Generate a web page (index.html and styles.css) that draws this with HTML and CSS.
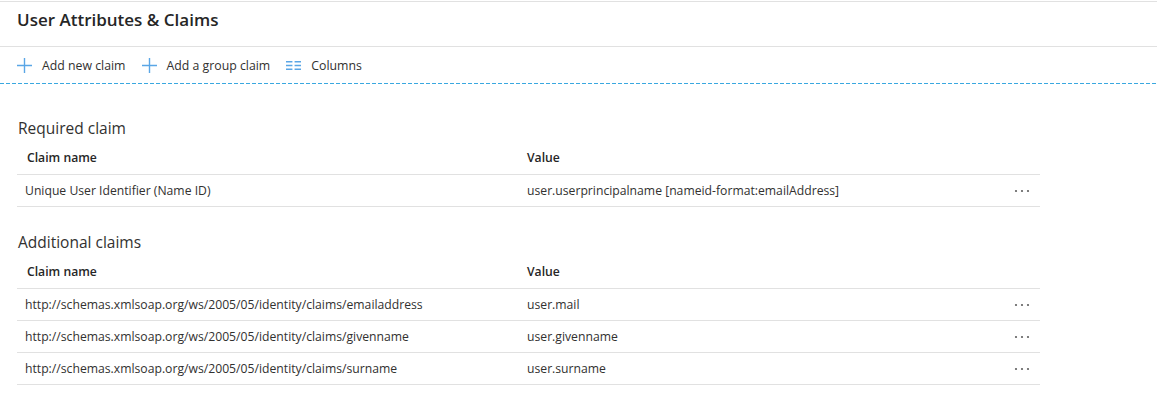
FILE: index.html
```html
<!DOCTYPE html>
<html lang="en">
<head>
  <meta charset="UTF-8">
  <title>User Attributes &amp; Claims</title>
  <link rel="stylesheet" href="styles.css">
</head>
<body>
  <div class="blade">
    <div class="blade-header">
      <h1>User Attributes &amp; Claims</h1>
    </div>

    <!-- Command bar -->
    <div class="command-bar">
      <button type="button" class="command">
        <svg class="icon" viewBox="0 0 14 14"><path d="M7 0v14M0 7h14" /></svg>
        <span>Add new claim</span>
      </button>
      <button type="button" class="command">
        <svg class="icon" viewBox="0 0 14 14"><path d="M7 0v14M0 7h14" /></svg>
        <span>Add a group claim</span>
      </button>
      <button type="button" class="command">
        <svg class="icon" viewBox="0 0 14 14"><path d="M0 3.5h6M0 7h6M0 10.5h6M8 3.5h6M8 7h6M8 10.5h6" /></svg>
        <span>Columns</span>
      </button>
    </div>

    <div class="content">
      <!-- Required claim -->
      <section class="claims">
        <h2>Required claim</h2>
        <div class="grid">
          <div class="row head">
            <div>Claim name</div>
            <div>Value</div>
            <div></div>
          </div>
          <div class="row">
            <div>Unique User Identifier (Name ID)</div>
            <div>user.userprincipalname [nameid-format:emailAddress]</div>
            <div class="more"><svg viewBox="0 0 16 4"><circle cx="2" cy="2" r="1.1"/><circle cx="8" cy="2" r="1.1"/><circle cx="14" cy="2" r="1.1"/></svg></div>
          </div>
        </div>
      </section>

      <!-- Additional claims -->
      <section class="claims">
        <h2>Additional claims</h2>
        <div class="grid">
          <div class="row head">
            <div>Claim name</div>
            <div>Value</div>
            <div></div>
          </div>
          <div class="row">
            <div>http://schemas.xmlsoap.org/ws/2005/05/identity/claims/emailaddress</div>
            <div>user.mail</div>
            <div class="more"><svg viewBox="0 0 16 4"><circle cx="2" cy="2" r="1.1"/><circle cx="8" cy="2" r="1.1"/><circle cx="14" cy="2" r="1.1"/></svg></div>
          </div>
          <div class="row">
            <div>http://schemas.xmlsoap.org/ws/2005/05/identity/claims/givenname</div>
            <div>user.givenname</div>
            <div class="more"><svg viewBox="0 0 16 4"><circle cx="2" cy="2" r="1.1"/><circle cx="8" cy="2" r="1.1"/><circle cx="14" cy="2" r="1.1"/></svg></div>
          </div>
          <div class="row">
            <div>http://schemas.xmlsoap.org/ws/2005/05/identity/claims/surname</div>
            <div>user.surname</div>
            <div class="more"><svg viewBox="0 0 16 4"><circle cx="2" cy="2" r="1.1"/><circle cx="8" cy="2" r="1.1"/><circle cx="14" cy="2" r="1.1"/></svg></div>
          </div>
        </div>
      </section>
    </div>
  </div>
</body>
</html>
```

FILE: styles.css
```css
/* General */
html {
  font-family: "Open Sans", "Noto Sans", sans-serif;
  color: #323130;
}
body {
  margin: 0;
  padding-top: 1px;
  background: #fff;
}

/* Header */
.blade-header {
  height: 44px;
  border-top: 1px solid #e1e1e1;
  border-bottom: 1px solid #e1e1e1;
  padding: 0 17px;
}
.blade-header h1 {
  margin: 0;
  padding-top: 6px;
  font-size: 17px;
  font-weight: 600;
  line-height: 24px;
  color: #262626;
}

/* Command bar */
.command-bar {
  display: flex;
  align-items: center;
  gap: 16px;
  height: 37px;
  padding: 0 17px;
  background: repeating-linear-gradient(90deg, #3aa8e0 0 4px, transparent 4px 6px) left bottom / 100% 1px no-repeat;
}
.command {
  display: flex;
  align-items: center;
  gap: 10px;
  padding: 0;
  border: none;
  background: none;
  font: inherit;
  font-size: 12.3px;
  color: #323130;
  cursor: pointer;
}
.command .icon {
  width: 15px;
  height: 15px;
  fill: none;
  stroke: #5aa6e6;
  stroke-width: 1.3;
}

/* Claims tables */
.content {
  padding: 33px 17px 0;
}
.claims {
  width: 1023px;
  margin-bottom: 24px;
}
.claims h2 {
  margin: 0 0 1px 1px;
  font-size: 15.5px;
  font-weight: 400;
  line-height: 22px;
}
.grid .row {
  display: grid;
  grid-template-columns: 502px 1fr 40px;
  align-items: center;
  height: 31px;
  padding-left: 8px;
  border-bottom: 1px solid #e1e1e1;
  font-size: 12.2px;
}
.grid .row.head {
  height: 34px;
  padding-left: 10px;
  grid-template-columns: 500px 1fr 40px;
  font-weight: 600;
  color: #262626;
}
.more {
  padding-left: 14px;
}
.more svg {
  width: 16px;
  height: 4px;
  fill: #5f5f5f;
  display: block;
}
```
